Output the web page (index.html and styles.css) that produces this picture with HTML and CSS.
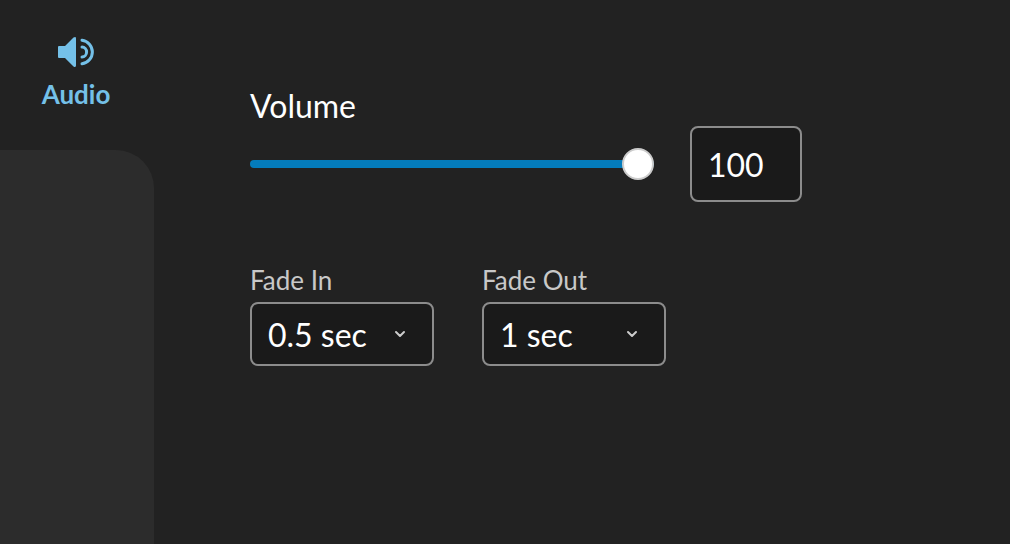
FILE: index.html
```html
<!DOCTYPE html>
<html lang="en">
<head>
    <meta charset="UTF-8">
    <meta name="viewport" content="width=device-width, initial-scale=1.0">
    <title>Audio</title>
    <link rel="stylesheet" href="styles.css">
</head>
<body>

<nav class="sidebar">
    <button type="button" class="tab">
        <svg class="tab-icon" width="36" height="30" viewBox="0 0 36 30" aria-hidden="true">
            <path d="M1 9H7L15.5 .6Q18 -.8 18 1.500V28.500Q18 30.800 15.500 29.400L7 21H1Q0 21 0 20V10Q0 9 1 9Z" fill="currentColor"/>
            <path d="M24 10A4.600 5 0 0 1 24 20M24 3.200A11.900 11.900 0 0 1 24 26.800" fill="none" stroke="currentColor" stroke-width="3" stroke-linecap="round"/>
        </svg>
        <span>Audio</span>
    </button>
    <div class="sidebar-rest"></div>
</nav>

<main class="panel">
    <label class="title" for="volume">Volume</label>
    <div class="volume-row">
        <input type="range" id="volume" class="slider" min="0" max="100" value="100">
        <input type="text" id="volumeValue" class="number" inputmode="numeric" value="100" aria-label="Volume value">
    </div>

    <div class="fade-row">
        <div class="field">
            <label for="fadeIn">Fade In</label>
            <div class="select">
                <select id="fadeIn">
                    <option>None</option>
                    <option selected>0.5 sec</option>
                    <option>1 sec</option>
                    <option>2 sec</option>
                </select>
                <svg class="chevron" width="12" height="8" viewBox="0 0 12 8" aria-hidden="true">
                    <path d="M2 2L6 6L10 2"/>
                </svg>
            </div>
        </div>
        <div class="field">
            <label for="fadeOut">Fade Out</label>
            <div class="select">
                <select id="fadeOut">
                    <option>None</option>
                    <option>0.5 sec</option>
                    <option selected>1 sec</option>
                    <option>2 sec</option>
                </select>
                <svg class="chevron" width="12" height="8" viewBox="0 0 12 8" aria-hidden="true">
                    <path d="M2 2L6 6L10 2"/>
                </svg>
            </div>
        </div>
    </div>
</main>

<script>
const volume = document.getElementById('volume');
const volumeValue = document.getElementById('volumeValue');

function setVolume(value) {
    volume.value = parseInt(value) || 0;
    volumeValue.value = volume.value;
    volume.style.setProperty('--fill', volume.value + '%');
}

volume.addEventListener('input', () => setVolume(volume.value));
volumeValue.addEventListener('change', () => setVolume(volumeValue.value));
</script>

</body>
</html>
```
FILE: styles.css
```css
* {
    box-sizing: border-box;
}

body {
    display: flex;
    min-height: 100vh;
    margin: 0;
    background-color: #222;
    color: #fff;
    font-family: Lato, sans-serif;
}

input, select, button {
    margin: 0;
    color: inherit;
    font-family: inherit;
}

/* sidebar */
.sidebar {
    display: flex;
    flex-direction: column;
    flex: none;
    width: 154px;
}

.tab {
    display: flex;
    flex-direction: column;
    align-items: center;
    gap: 11px;
    height: 150px;
    padding: 37px 2px 0 0;
    border: none;
    background: none;
    color: #74c0e8;
    font-size: 26px;
    font-weight: bold;
    line-height: 32px;
    cursor: pointer;
}

.tab-icon {
    flex: none;
}

.sidebar-rest {
    flex: 1;
    border-top-right-radius: 38px;
    background-color: #2c2c2c;
}

/* settings */
.panel {
    flex: 1;
    padding: 86px 96px 32px;
}

.title {
    display: block;
    font-size: 32px;
    line-height: 40px;
}

.volume-row {
    display: flex;
    align-items: center;
    gap: 36px;
    max-width: 552px;
}

.slider {
    --fill: 100%;
    flex: 1;
    min-width: 0;
    height: 32px;
    background: none;
    appearance: none;
    cursor: pointer;
}

.slider::-webkit-slider-runnable-track {
    height: 8px;
    border-radius: 4px;
    background: linear-gradient(to right, #047cbc var(--fill), #555 var(--fill));
}

.slider::-webkit-slider-thumb {
    width: 32px;
    height: 32px;
    margin-top: -12px;
    border: 2px solid #ccc;
    border-radius: 50%;
    background-color: #fff;
    appearance: none;
}

.number, .select select {
    border: 2px solid #8c8c8c;
    border-radius: 8px;
    background-color: #1a1a1a;
    font-size: 32px;
}

.number {
    width: 112px;
    height: 76px;
    padding: 0 16px;
}

.fade-row {
    display: flex;
    flex-wrap: wrap;
    gap: 48px;
    margin-top: 62px;
}

.field {
    display: flex;
    flex-direction: column;
    gap: 6px;
    width: 184px;
}

.field label {
    color: #c8c8c8;
    font-size: 26px;
    line-height: 32px;
}

.select {
    position: relative;
}

.select select {
    display: block;
    width: 100%;
    height: 64px;
    padding: 0 16px;
    appearance: none;
    cursor: pointer;
}

.chevron {
    position: absolute;
    top: 28px;
    right: 28px;
    fill: none;
    stroke: #ccc;
    stroke-width: 2;
    stroke-linecap: round;
    stroke-linejoin: round;
    pointer-events: none;
}
```
